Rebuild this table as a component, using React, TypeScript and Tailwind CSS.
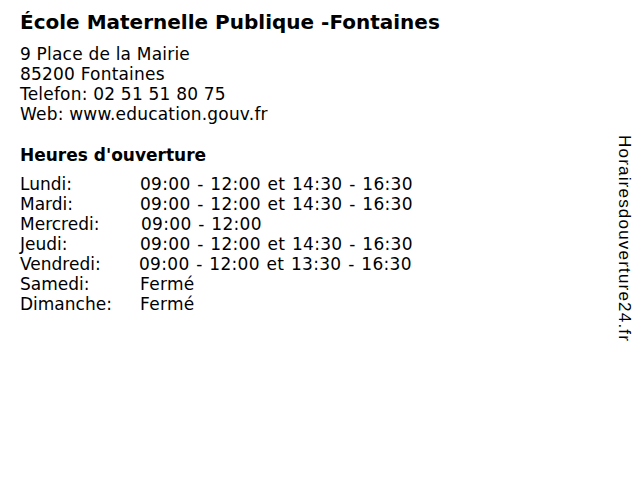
const hours = [
  { day: "Lundi:", time: "09:00 - 12:00 et 14:30 - 16:30", shift: "" },
  { day: "Mardi:", time: "09:00 - 12:00 et 14:30 - 16:30", shift: "" },
  { day: "Mercredi:", time: "09:00 - 12:00", shift: "pl-px" },
  { day: "Jeudi:", time: "09:00 - 12:00 et 14:30 - 16:30", shift: "" },
  { day: "Vendredi:", time: "09:00 - 12:00 et 13:30 - 16:30", shift: "-ml-px" },
  { day: "Samedi:", time: "Fermé", shift: "" },
  { day: "Dimanche:", time: "Fermé", shift: "" },
];

export default function App() {
  return (
    <div className="flex h-[480px] w-[640px] bg-white text-black">
      {/* contenu */}
      <div className="flex-1 pl-5 pt-[10px] font-['DejaVu_Sans',sans-serif]">
        <h1 className="text-[20px] font-bold leading-6">
          École Maternelle Publique -Fontaines
        </h1>

        <div className="mt-[10px] text-[17px] leading-5 tracking-[0.2px]">
          <p>9 Place de la Mairie</p>
          <p>85200 Fontaines</p>
          <p>Telefon: 02 51 51 80 75</p>
          <p>Web: www.education.gouv.fr</p>
        </div>

        <h2 className="mt-[21px] text-[17px] font-bold leading-5">
          Heures d'ouverture
        </h2>

        <div className="mt-[9px] text-[17px] leading-5">
          {hours.map((h) => (
            <div key={h.day} className="flex">
              <span className="w-[120px]">{h.day}</span>
              <span className={`${h.shift} tracking-[0.3px] [word-spacing:1px]`}>{h.time}</span>
            </div>
          ))}
        </div>
      </div>

      {/* bandeau vertical */}
      <div className="w-[40px] pt-[135px] pl-[14px] font-['Liberation_Sans',sans-serif]">
        <span className="text-[17px] leading-5 tracking-[1.2px] [writing-mode:vertical-rl]">
          Horairesdouverture24.fr
        </span>
      </div>
    </div>
  );
}
